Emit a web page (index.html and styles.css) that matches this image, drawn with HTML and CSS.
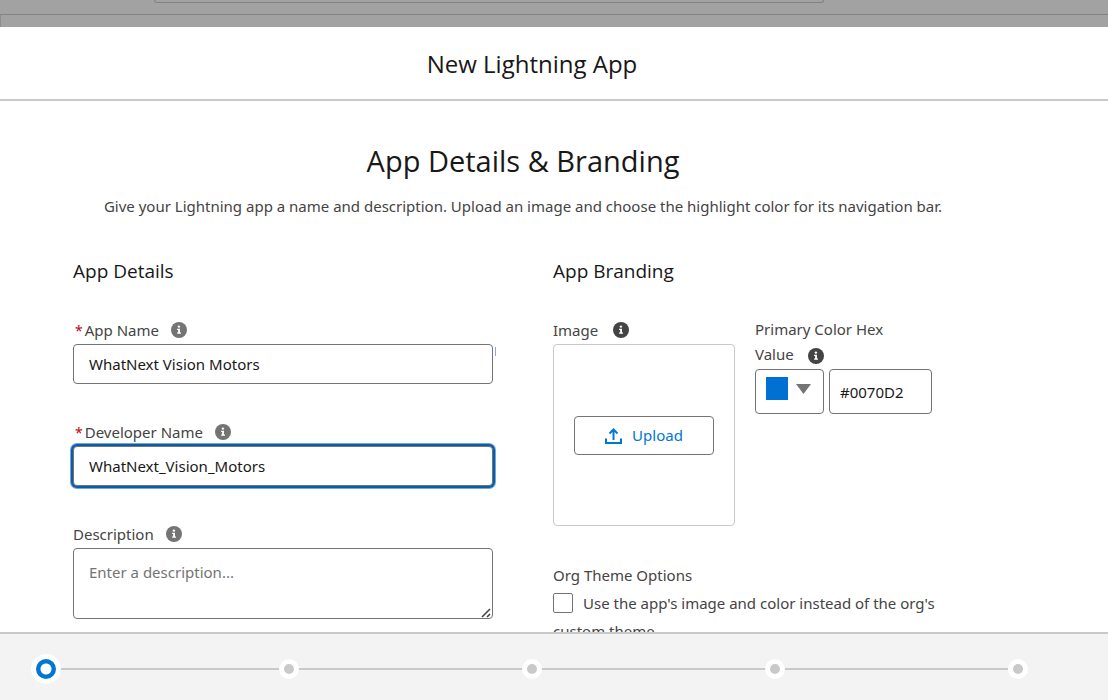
FILE: index.html
```html
<!DOCTYPE html>
<html lang="en">
<head>
<meta charset="utf-8">
<title>New Lightning App</title>
<link rel="stylesheet" href="styles.css">
</head>
<body>
<svg class="sprite" aria-hidden="true">
  <symbol id="info" viewBox="0 0 16 16">
    <circle cx="8" cy="8" r="8" fill="currentColor"/>
    <circle cx="7.9" cy="4.6" r="1.2" fill="#fff"/>
    <path d="M6.1 6.8h2.9v3.6h1v1.300H6.1v-1.300h1V8.1h-1z" fill="#fff"/>
  </symbol>
</svg>
<div class="backdrop">
  <div class="search-edge"></div>
  <div class="nav-edge"></div>
</div>
<main class="modal">
  <header class="modal-header"><h1>New Lightning App</h1></header>
  <form class="modal-body">
    <h2>App Details &amp; Branding</h2>
    <p class="intro">Give your Lightning app a name and description. Upload an image and choose the highlight color for its navigation bar.</p>
    <div class="columns">
      <section>
        <h3>App Details</h3>
        <div class="field">
          <div class="label-row required">
            <label for="app-name"><abbr>*</abbr>App Name</label>
            <svg class="info"><use href="#info"/></svg>
          </div>
          <div class="input-wrap"><input class="control" id="app-name" type="text" value="WhatNext Vision Motors"></div>
        </div>
        <div class="field">
          <div class="label-row required">
            <label for="dev-name"><abbr>*</abbr>Developer Name</label>
            <svg class="info"><use href="#info"/></svg>
          </div>
          <input class="control active" id="dev-name" type="text" value="WhatNext_Vision_Motors">
        </div>
        <div class="field">
          <div class="label-row">
            <label for="description">Description</label>
            <svg class="info"><use href="#info"/></svg>
          </div>
          <div class="textarea-wrap">
            <textarea class="control" id="description" placeholder="Enter a description..."></textarea>
            <svg class="grip" viewBox="0 0 10 10"><path d="M1 9 9 1M6 9 9 6" fill="none" stroke="#444" stroke-width="1.6"/></svg>
          </div>
        </div>
      </section>
      <section>
        <h3>App Branding</h3>
        <div class="branding">
          <div class="image-field">
            <div class="label-row dark">
              <span>Image</span>
              <svg class="info"><use href="#info"/></svg>
            </div>
            <div class="dropzone">
              <button class="upload" type="button">
                <svg viewBox="0 0 17 17" fill="none" stroke="currentColor" stroke-width="2"><path d="M1 11.500V16h15v-4.500M8.500 13V3M4.500 6.500l4-4 4 4"/></svg>
                Upload
              </button>
            </div>
          </div>
          <div class="color-field">
            <label class="color-label" for="hex">Primary Color Hex Value <svg class="info"><use href="#info"/></svg></label>
            <div class="color-row">
              <button class="swatch" type="button" aria-label="Choose color"><span class="chip"></span><svg class="caret" viewBox="0 0 15 10"><path d="M0 0h15L7.500 10z" fill="#747474"/></svg></button>
              <input class="control hex" id="hex" type="text" value="#0070D2">
            </div>
          </div>
        </div>
        <div class="theme">
          <div class="theme-title">Org Theme Options</div>
          <label class="check"><input type="checkbox">Use the app's image and color instead of the org's custom theme</label>
        </div>
      </section>
    </div>
  </form>
  <footer class="modal-footer">
    <ol class="progress">
      <li class="step current"></li>
      <li class="step"></li>
      <li class="step"></li>
      <li class="step"></li>
      <li class="step"></li>
    </ol>
  </footer>
</main>
</body>
</html>
```

FILE: styles.css
```css
* { box-sizing: border-box; }

body {
  margin: 0;
  height: 100vh;
  display: flex;
  flex-direction: column;
  overflow: hidden;
  background: #fff;
  color: #181818;
  font: 15px/26px "Noto Sans", "Open Sans", sans-serif;
}

h1, h2, h3, p, ol { margin: 0; padding: 0; font-weight: 400; }
h1, h2, h3 { font-family: "Open Sans", "Noto Sans", sans-serif; }
input, button, textarea { font: inherit; color: inherit; margin: 0; }
.sprite { position: absolute; width: 0; height: 0; }

.backdrop { flex: none; height: 27px; background: #a2a2a2; }
.search-edge {
  height: 3px;
  margin: 0 284px 0 154px;
  border: 1px solid #828282;
  border-top: 0;
  border-radius: 0 0 4px 4px;
}
.nav-edge {
  height: 13px;
  margin-top: 11px;
  border-top: 1px solid #828282;
  border-left: 1px solid #8e8e8e;
}

.modal { flex: 1; min-height: 0; display: flex; flex-direction: column; }
.modal-header {
  flex: none;
  padding: 19px 44px 17px 0;
  border-bottom: 2px solid #c9c9c9;
  text-align: center;
}
h1 { font-size: 24px; line-height: 36px; }

.modal-body {
  flex: 1;
  min-height: 0;
  overflow: hidden;
  padding: 38px 135px 0 73px;
  color: #444;
}
h2 { font-size: 29px; line-height: 44px; text-align: center; color: #181818; }
.intro { margin-top: 10px; text-align: center; }
.columns {
  display: grid;
  grid-template-columns: 1fr 1fr;
  gap: 60px;
  margin-top: 37px;
}
h3 { font-size: 19px; line-height: 30px; color: #181818; margin-bottom: 30px; }

.field { margin-bottom: 34px; }
.label-row { display: flex; align-items: center; gap: 12px; height: 28px; }
.required { padding-left: 2px; }
abbr { color: #ba0517; margin-right: 2px; font-size: 14px; }
.info { display: block; width: 16px; height: 16px; color: #747474; }
.dark .info, .color-label .info { color: #444; }
.dark { gap: 15px; }

.control {
  display: block;
  width: 100%;
  height: 40px;
  padding: 0 15px;
  border: 1px solid #747474;
  border-radius: 4px;
  background: #fff;
  color: #181818;
  outline: 0;
}
.input-wrap { position: relative; }
.input-wrap::after {
  content: "";
  position: absolute;
  top: 3px;
  right: -3px;
  width: 1px;
  height: 9px;
  background: #8fabcb;
}
.active { box-shadow: 0 0 0 2px #0b5cab, 0 0 0 3px #6fa8d8; }
.textarea-wrap { position: relative; }
textarea.control { height: 71px; padding: 10px 15px; resize: none; }
.control::placeholder { color: #747474; opacity: 1; }
.grip { position: absolute; right: 2px; bottom: 1px; width: 10px; height: 10px; }

.branding { display: flex; gap: 20px; }
.image-field { flex: none; width: 182px; }
.dropzone {
  display: flex;
  align-items: center;
  justify-content: center;
  height: 182px;
  border: 1px solid #c9c9c9;
  border-radius: 4px;
}
.upload {
  display: flex;
  align-items: center;
  justify-content: center;
  gap: 10px;
  width: 140px;
  height: 39px;
  padding: 0;
  border: 1px solid #747474;
  border-radius: 4px;
  background: #fff;
  color: #0176d3;
}
.upload svg { width: 17px; height: 17px; }

.color-field { width: 177px; }
.color-label { display: block; line-height: 25px; padding: 1px 20px 2px 0; }
.color-label .info { display: inline-block; vertical-align: -4px; margin-left: 10px; }
.color-row { display: flex; gap: 5px; }
.swatch {
  display: flex;
  flex: none;
  gap: 8px;
  width: 69px;
  height: 45px;
  padding: 7px 10px;
  border: 1px solid #747474;
  border-radius: 4px;
  background: #fff;
}
.chip { width: 22px; height: 23px; background: #0070d2; }
.caret { width: 15px; height: 10px; margin-top: 7px; }
.hex { flex: 1; min-width: 0; height: 45px; padding: 0 10px; }

.theme { margin-top: 35px; line-height: 28px; }
.check { display: block; line-height: 28px; }
.check input {
  appearance: none;
  width: 20px;
  height: 20px;
  margin-right: 10px;
  border: 1px solid #747474;
  border-radius: 2px;
  background: #fff;
  vertical-align: -4px;
}

.modal-footer {
  flex: none;
  height: 68px;
  padding: 20px 75px 0 31px;
  border-top: 2px solid #c9c9c9;
  background: #f3f3f3;
}
.progress {
  display: flex;
  justify-content: space-between;
  align-items: center;
  height: 30px;
  padding-right: 5px;
  list-style: none;
  background: linear-gradient(#c9c9c9, #c9c9c9) center / calc(100% - 30px) 2px no-repeat;
}
.step {
  width: 20px;
  height: 20px;
  border: 5px solid #fff;
  border-radius: 50%;
  background: #c9c9c9;
}
.current {
  width: 30px;
  height: 30px;
  margin-right: -5px;
  background: radial-gradient(circle, #fff 5px, #0176d3 6px);
}
```
